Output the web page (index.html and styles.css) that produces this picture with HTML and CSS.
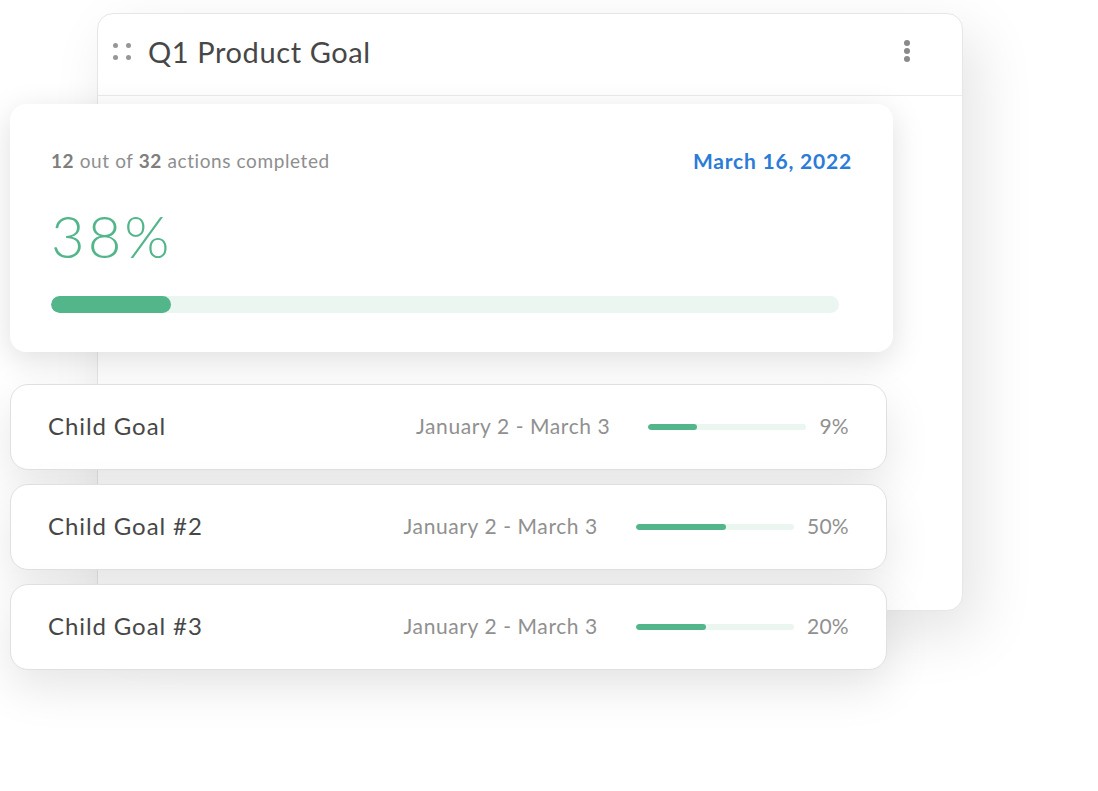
FILE: index.html
```html
<!DOCTYPE html>
<html lang="en">
<head>
  <meta charset="UTF-8" />
  <meta name="viewport" content="width=device-width, initial-scale=1.0" />
  <title>Q1 Product Goal</title>
  <link rel="stylesheet" href="styles.css">
</head>
<body>
  <div class="scene">
    <div class="goal-card">
      <div class="goal-header">
        <span class="drag-handle">
          <i></i><i></i><i></i><i></i>
        </span>
        <h1>Q1 Product Goal</h1>
        <span class="kebab"><i></i><i></i><i></i></span>
      </div>
    </div>

    <div class="front">
      <div class="summary">
        <div class="summary-top">
          <div class="count"><b>12</b> out of <b>32</b> actions completed</div>
          <div class="due">March 16, 2022</div>
        </div>
        <div class="big-pct">38%</div>
        <div class="track big"><div class="fill" style="width: 120px"></div></div>
      </div>

      <div class="children">
        <div class="child">
          <div class="child-name">Child Goal</div>
          <div class="child-dates">January 2 - March 3</div>
          <div class="track small"><div class="fill" style="width: 49px"></div></div>
          <div class="child-pct">9%</div>
        </div>
        <div class="child">
          <div class="child-name">Child Goal #2</div>
          <div class="child-dates">January 2 - March 3</div>
          <div class="track small"><div class="fill" style="width: 90px"></div></div>
          <div class="child-pct">50%</div>
        </div>
        <div class="child">
          <div class="child-name">Child Goal #3</div>
          <div class="child-dates">January 2 - March 3</div>
          <div class="track small"><div class="fill" style="width: 70px"></div></div>
          <div class="child-pct">20%</div>
        </div>
      </div>
    </div>
  </div>
</body>
</html>
```

FILE: styles.css
```css
body {
  margin: 0;
  padding: 0;
  background: #fff;
  font-family: 'Lato', 'Open Sans', sans-serif;
  color: #444;
}
.scene {
  display: grid;
  width: 1098px;
  height: 791px;
  overflow: hidden;
}
.goal-card, .front {
  grid-area: 1 / 1;
}
.goal-card {
  margin: 13px 0 0 97px;
  width: 866px;
  height: 598px;
  box-sizing: border-box;
  background: #fff;
  border: 1px solid #e6e6e6;
  border-radius: 16px;
  box-shadow: 14px 22px 60px rgba(0, 0, 0, 0.11);
}
.goal-header {
  display: flex;
  align-items: center;
  height: 82px;
  box-sizing: border-box;
  padding: 0 52px 7px 15px;
  border-bottom: 1px solid #ebebeb;
}
.goal-header h1 {
  flex: 1;
  margin: 0 0 0 17px;
  font-size: 29px;
  font-weight: 400;
  color: #474747;
  letter-spacing: 0.6px;
}
.drag-handle {
  display: grid;
  grid-template-columns: 5px 5px;
  gap: 7px 8px;
}
.drag-handle i, .kebab i {
  display: block;
  width: 5px;
  height: 5px;
  border-radius: 50%;
  background: #969696;
}
.kebab {
  display: flex;
  flex-direction: column;
  gap: 2px;
}
.kebab i {
  width: 6px;
  height: 6px;
  background: #8a8a8a;
}
.front {
  display: flex;
  flex-direction: column;
  align-items: flex-start;
  padding: 104px 0 0 10px;
}
.summary {
  width: 883px;
  height: 248px;
  box-sizing: border-box;
  padding: 45px 41px 0 41px;
  background: #fff;
  border-radius: 16px;
  box-shadow: 0 8px 32px rgba(0, 0, 0, 0.13);
}
.summary-top {
  display: flex;
  justify-content: space-between;
  align-items: center;
  height: 24px;
  line-height: 24px;
}
.count {
  font-size: 19px;
  color: #8e8e8e;
  letter-spacing: 0.6px;
}
.count b {
  color: #7e7e7e;
  font-weight: 700;
}
.due {
  font-size: 21px;
  font-weight: 700;
  color: #2b7bd8;
  letter-spacing: 0.8px;
}
.big-pct {
  margin-top: 35px;
  height: 56px;
  font-size: 58px;
  font-weight: 300;
  line-height: 56px;
  color: #52b68a;
  letter-spacing: 3px;
}
.track {
  background: #ebf6f0;
  overflow: hidden;
}
.track.big {
  margin-top: 32px;
  width: 788px;
  height: 17px;
  border-radius: 9px;
}
.fill {
  height: 100%;
  background: #52b68a;
  border-radius: 9px;
}
.children {
  display: flex;
  flex-direction: column;
  gap: 14px;
  margin-top: 32px;
}
.child {
  display: flex;
  align-items: center;
  width: 877px;
  height: 86px;
  box-sizing: border-box;
  padding: 0 37px 3px 37px;
  background: #fff;
  border: 1px solid #e0e0e0;
  border-radius: 18px;
  box-shadow: 0 18px 46px rgba(0, 0, 0, 0.1);
}
.child-name {
  flex: 1;
  font-size: 24px;
  color: #474747;
  letter-spacing: 0.9px;
}
.child-dates {
  font-size: 21px;
  color: #909090;
  letter-spacing: 0.6px;
}
.track.small {
  margin: 3px 13px 0 38px;
  width: 158px;
  height: 6px;
  border-radius: 3px;
}
.child-pct {
  font-size: 21px;
  color: #909090;
  letter-spacing: 0.3px;
}
```
